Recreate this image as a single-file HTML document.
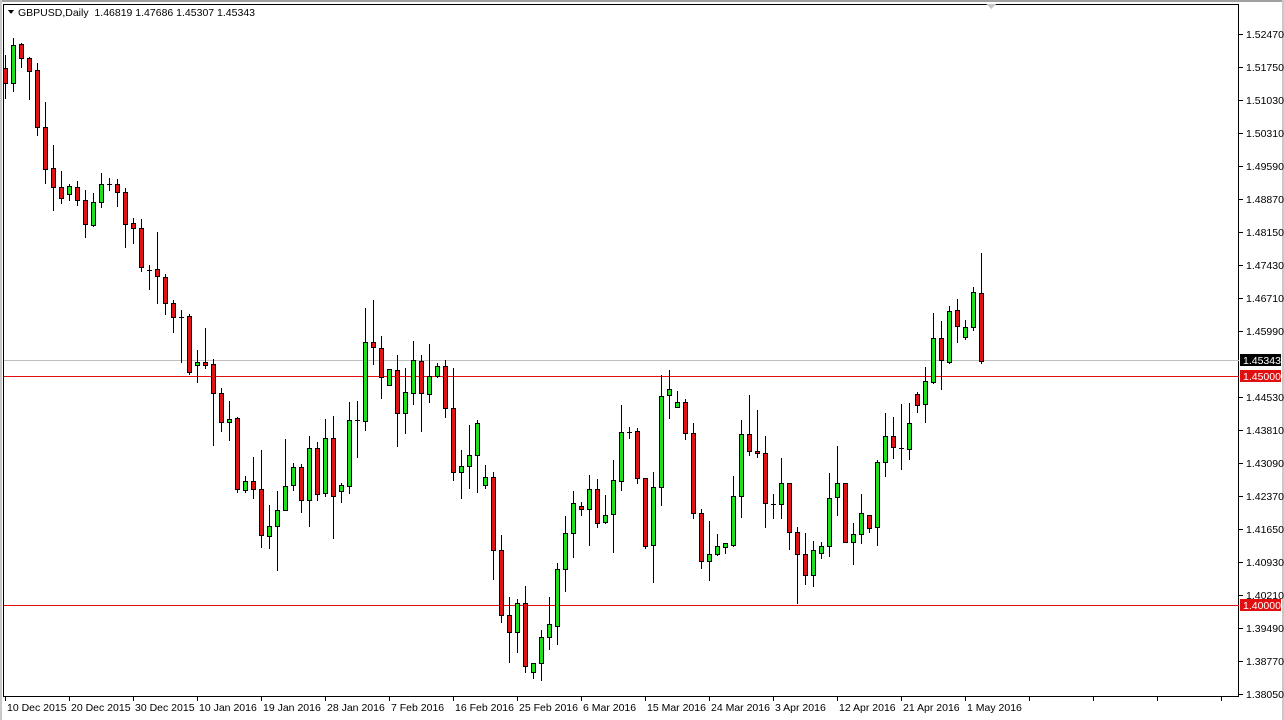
<!DOCTYPE html>
<html><head><meta charset="utf-8"><style>
html,body{margin:0;padding:0;background:#fff;width:1284px;height:720px;overflow:hidden}
svg{display:block;font-family:"Liberation Sans",sans-serif;font-size:10.5px}
</style></head><body>
<svg id="s" width="1284" height="720" xmlns="http://www.w3.org/2000/svg" shape-rendering="crispEdges">
<rect x="0" y="0" width="1284" height="720" fill="#fff"/>
<rect x="0" y="0" width="1284" height="2" fill="#a0a0a0"/>
<rect x="1282" y="0" width="2" height="720" fill="#c8c8c8"/>
<rect x="0" y="0" width="2" height="720" fill="#c8c8c8"/>
<rect x="3.5" y="4.5" width="1235" height="692" fill="none" stroke="#000" stroke-width="1"/>
<path d="M986 4 L996 4 L991 9 Z" fill="#c8c8c8"/>
<line x1="4" y1="360.5" x2="1239" y2="360.5" stroke="#c0c0c0"/>
<line x1="4" y1="376.5" x2="1239" y2="376.5" stroke="#e01010"/>
<line x1="4" y1="605.5" x2="1239" y2="605.5" stroke="#e01010"/>
<g id="c"></g>
<path d="M8 10 L14 10 L11 14 Z" fill="#000"/>
<text x="18" y="16" fill="#000">GBPUSD,Daily&#160;&#160;1.46819 1.47686 1.45307 1.45343</text>
<g fill="#000" id="ax">
<text x="1246" y="38">1.52470</text>
<text x="1246" y="71">1.51750</text>
<text x="1246" y="104">1.51030</text>
<text x="1246" y="137">1.50310</text>
<text x="1246" y="170">1.49590</text>
<text x="1246" y="203">1.48870</text>
<text x="1246" y="236">1.48150</text>
<text x="1246" y="269">1.47430</text>
<text x="1246" y="302">1.46710</text>
<text x="1246" y="335">1.45990</text>
<text x="1246" y="401">1.44530</text>
<text x="1246" y="434">1.43810</text>
<text x="1246" y="467">1.43090</text>
<text x="1246" y="500">1.42370</text>
<text x="1246" y="533">1.41650</text>
<text x="1246" y="566">1.40930</text>
<text x="1246" y="599">1.40210</text>
<text x="1246" y="632">1.39490</text>
<text x="1246" y="665">1.38770</text>
<text x="1246" y="698">1.38050</text>
</g>
<rect x="1240" y="354" width="41" height="12" fill="#000"/>
<text x="1243" y="364" fill="#fff">1.45343</text>
<rect x="1240" y="370" width="41" height="12" fill="#e01010"/>
<text x="1243" y="380" fill="#fff">1.45000</text>
<rect x="1240" y="599" width="41" height="12" fill="#e01010"/>
<text x="1243" y="609" fill="#fff">1.40000</text>
<g fill="#000">
<text x="7" y="711">10 Dec 2015</text>
<text x="71" y="711">20 Dec 2015</text>
<text x="135" y="711">30 Dec 2015</text>
<text x="199" y="711">10 Jan 2016</text>
<text x="263" y="711">19 Jan 2016</text>
<text x="327" y="711">28 Jan 2016</text>
<text x="391" y="711">7 Feb 2016</text>
<text x="455" y="711">16 Feb 2016</text>
<text x="519" y="711">25 Feb 2016</text>
<text x="583" y="711">6 Mar 2016</text>
<text x="647" y="711">15 Mar 2016</text>
<text x="711" y="711">24 Mar 2016</text>
<text x="775" y="711">3 Apr 2016</text>
<text x="839" y="711">12 Apr 2016</text>
<text x="903" y="711">21 Apr 2016</text>
<text x="967" y="711">1 May 2016</text>
</g>
<g id="t"></g>
</svg>
<script>
var D=[
['r',55,98,68,83],['g',38,91,45,83],['r',43,67,44,58],['r',57,99,58,71],['r',63,135,70,127],
['r',102,183,127,169],['r',145,210,168,187],['r',171,203,187,198],['g',184,200,186,194],['r',181,205,187,200],
['r',190,237,200,224],['g',193,226,202,225],['g',173,207,184,202],['d',178,190,184,184],['r',179,206,184,192],
['r',188,247,192,224],['r',218,243,223,228],['r',219,271,228,267],['d',265,289,270,270],['r',232,303,269,276],
['r',274,314,277,303],['r',300,332,303,317],['d',310,362,317,317],['r',314,374,316,372],['g',350,382,362,365],
['r',328,368,362,365],['r',359,445,364,393],['r',388,431,393,422],['g',401,440,419,422],['r',417,492,418,489],
['g',476,492,481,490],['r',457,498,481,489],['r',450,547,489,535],['g',505,548,526,536],['g',491,570,510,526],
['g',439,510,486,510],['g',463,490,467,485],['r',464,512,467,500],['g',436,526,448,500],['r',442,500,448,494],
['g',419,496,438,493],['r',416,538,438,496],['g',483,502,485,491],['g',402,493,420,486],['d',401,457,420,420],
['g',308,430,342,421],['r',300,364,342,347],['r',336,398,348,377],['g',369,385,369,385],['r',355,446,370,413],
['g',368,433,392,413],['g',341,404,360,393],['r',355,431,361,393],['g',344,402,376,394],['g',363,377,366,376],
['r',360,417,366,408],['r',368,480,408,472],['g',450,498,466,472],['g',425,488,455,466],['g',420,492,423,455],
['g',465,488,477,485],['r',472,579,477,550],['r',535,622,550,615],['r',597,662,615,632],['g',599,652,603,632],
['r',586,672,603,666],['g',663,678,663,672],['g',630,680,637,663],['g',597,649,624,637],['g',563,644,569,626],
['g',516,591,533,569],['g',491,557,503,533],['r',502,515,506,509],['g',475,545,489,509],['r',479,527,489,523],
['g',495,523,515,522],['g',460,552,480,514],['g',405,490,432,481],['d',427,438,432,432],['r',428,483,431,478],
['r',478,548,478,546],['g',472,582,487,545],['g',375,505,396,487],['g',370,418,389,395],['g',391,407,402,407],
['r',399,439,402,433],['r',423,518,433,513],['r',509,568,513,561],['g',521,580,554,561],['g',534,555,546,554],
['g',543,553,543,547],['g',476,546,496,545],['g',420,517,434,496],['r',395,455,434,451],['r',410,457,451,453],
['r',436,527,453,503],['d',494,518,504,504],['g',458,518,483,504],['r',483,549,483,532],['r',527,603,532,554],
['r',533,584,554,575],['g',541,586,550,575],['g',542,558,546,553],['g',473,556,498,546],['g',446,515,483,497],
['r',483,542,483,542],['g',523,564,534,542],['g',494,543,513,534],['r',515,532,515,528],['g',460,545,462,527],
['g',413,476,436,462],['r',417,458,436,447],['d',404,469,448,448],['g',403,459,423,449],['r',392,412,394,405],
['g',367,422,381,404],['g',313,383,338,382],['r',321,389,338,360],['g',306,363,311,362],['r',299,342,310,326],
['g',320,339,327,337],['g',287,330,292,327],['r',253,363,293,361]];
var g=document.getElementById('c'),h='';
for(var i=0;i<D.length;i++){var d=D[i],cx=5+8*i;
h+='<line x1="'+(cx+.5)+'" y1="'+d[1]+'" x2="'+(cx+.5)+'" y2="'+(d[2]+1)+'" stroke="#000"/>';
if(d[0]=='d'){h+='<line x1="'+(cx-2)+'" y1="'+(d[3]+.5)+'" x2="'+(cx+3)+'" y2="'+(d[3]+.5)+'" stroke="#000"/>';}
else{var hh=Math.max(d[4]-d[3],2);h+='<rect x="'+(cx-1.5)+'" y="'+(d[3]+.5)+'" width="4" height="'+hh+'" fill="'+(d[0]=='g'?'#1ee01e':'#e01414')+'" stroke="#000"/>';}}
g.innerHTML=h;
var t='';var ys=[38,71,104,137,170,203,236,269,302,335,401,434,467,500,533,566,599,632,665,698];
for(var k=0;k<ys.length;k++)t+='<line x1="1239" y1="'+(ys[k]-3.5)+'" x2="1243" y2="'+(ys[k]-3.5)+'" stroke="#000"/>';
for(var x=5;x<1239;x+=64)t+='<line x1="'+(x+.5)+'" y1="697" x2="'+(x+.5)+'" y2="701" stroke="#000"/>';
document.getElementById('t').innerHTML=t;
</script>
</body></html>
